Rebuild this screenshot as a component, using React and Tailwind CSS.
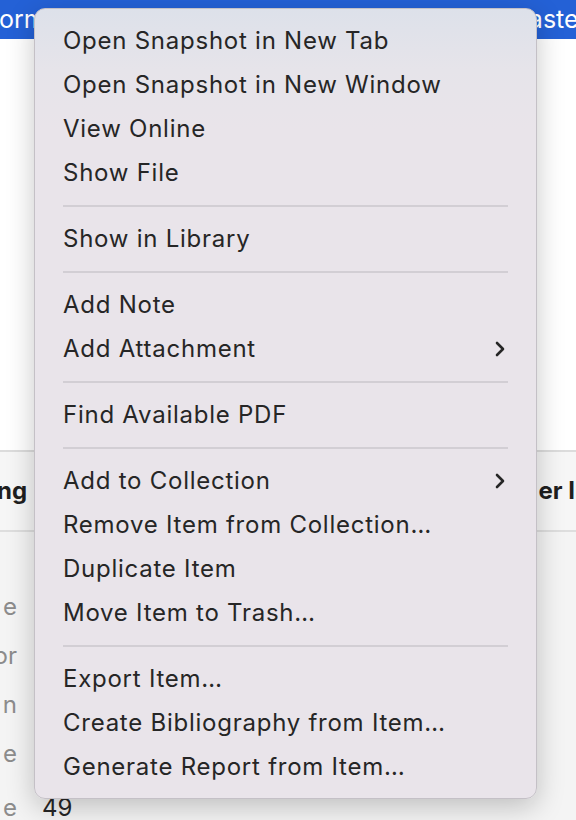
import { ChevronRight } from "lucide-react";

const groups = [
  [
    { label: "Open Snapshot in New Tab" },
    { label: "Open Snapshot in New Window" },
    { label: "View Online" },
    { label: "Show File" },
  ],
  [{ label: "Show in Library" }],
  [{ label: "Add Note" }, { label: "Add Attachment", sub: true }],
  [{ label: "Find Available PDF" }],
  [
    { label: "Add to Collection", sub: true },
    { label: "Remove Item from Collection…" },
    { label: "Duplicate Item" },
    { label: "Move Item to Trash…" },
  ],
  [
    { label: "Export Item…" },
    { label: "Create Bibliography from Item…" },
    { label: "Generate Report from Item…" },
  ],
];

const sideLabels = ["e", "or", "n", "e"];

export default function App() {
  return (
    <div className="relative w-[576px] h-[820px] overflow-hidden bg-white font-['Inter',sans-serif]">
      {/* background window */}
      <div className="flex flex-col h-full">
        <div className="h-[39px] shrink-0 bg-[#2461d6] flex items-center justify-between text-white text-[25px] leading-none">
          <span className="-ml-[1px]">orm</span>
          <span className="mr-[-12px]">aster</span>
        </div>
        <div className="h-[411px] shrink-0 bg-white" />
        <div className="h-[2px] shrink-0 bg-[#dcdcdc]" />
        <div className="h-[78px] shrink-0 bg-[#f6f6f6] flex items-center justify-between text-[24px] font-bold text-[#1f1f1f]">
          <span className="-ml-[3px]">ng</span>
          <span className="mr-[-14px]">er In</span>
        </div>
        <div className="h-[2px] shrink-0 bg-[#dedede]" />
        <div className="flex-1 min-h-0 bg-[#f4f4f4] pt-[60px]">
          {sideLabels.map((t, i) => (
            <div key={i} className="h-[49px] w-[17px] flex justify-end text-[24px] text-[#8c8c8c] leading-[30px]">
              <span className="whitespace-nowrap">{t}</span>
            </div>
          ))}
          <div className="flex items-center h-[40px] text-[24px] leading-[30px]">
            <span className="w-[17px] text-right text-[#8c8c8c]">e</span>
            <span className="ml-[25px] text-[#262626]">49</span>
          </div>
        </div>
      </div>

      {/* context menu */}
      <div className="absolute left-[34px] top-[8px] w-[503px] h-[791px] rounded-[11px] border border-[#c4c0c6] bg-[linear-gradient(to_bottom,#dde1ea_0px,#e6e4ea_60px,#e9e4ea_120px,#e9e4ea_100%)] shadow-[0_8px_28px_rgba(0,0,0,0.22)] pt-[10px] pb-[9px]">
        {groups.map((g, gi) => (
          <div key={gi}>
            {gi > 0 && (
              <div className="h-[22px] flex items-center px-[28px]">
                <div className="h-[2px] w-full bg-[#d2ced4]" />
              </div>
            )}
            {g.map((item) => (
              <div key={item.label} className="h-[44px] flex items-center justify-between pl-[28px] pr-[28px] text-[24px] text-[#262626] tracking-[0.75px]">
                <span>{item.label}</span>
                {item.sub && <ChevronRight className="w-[24px] h-[24px] -mr-[4px]" strokeWidth={2.6} color="#262626" />}
              </div>
            ))}
          </div>
        ))}
      </div>
    </div>
  );
}
